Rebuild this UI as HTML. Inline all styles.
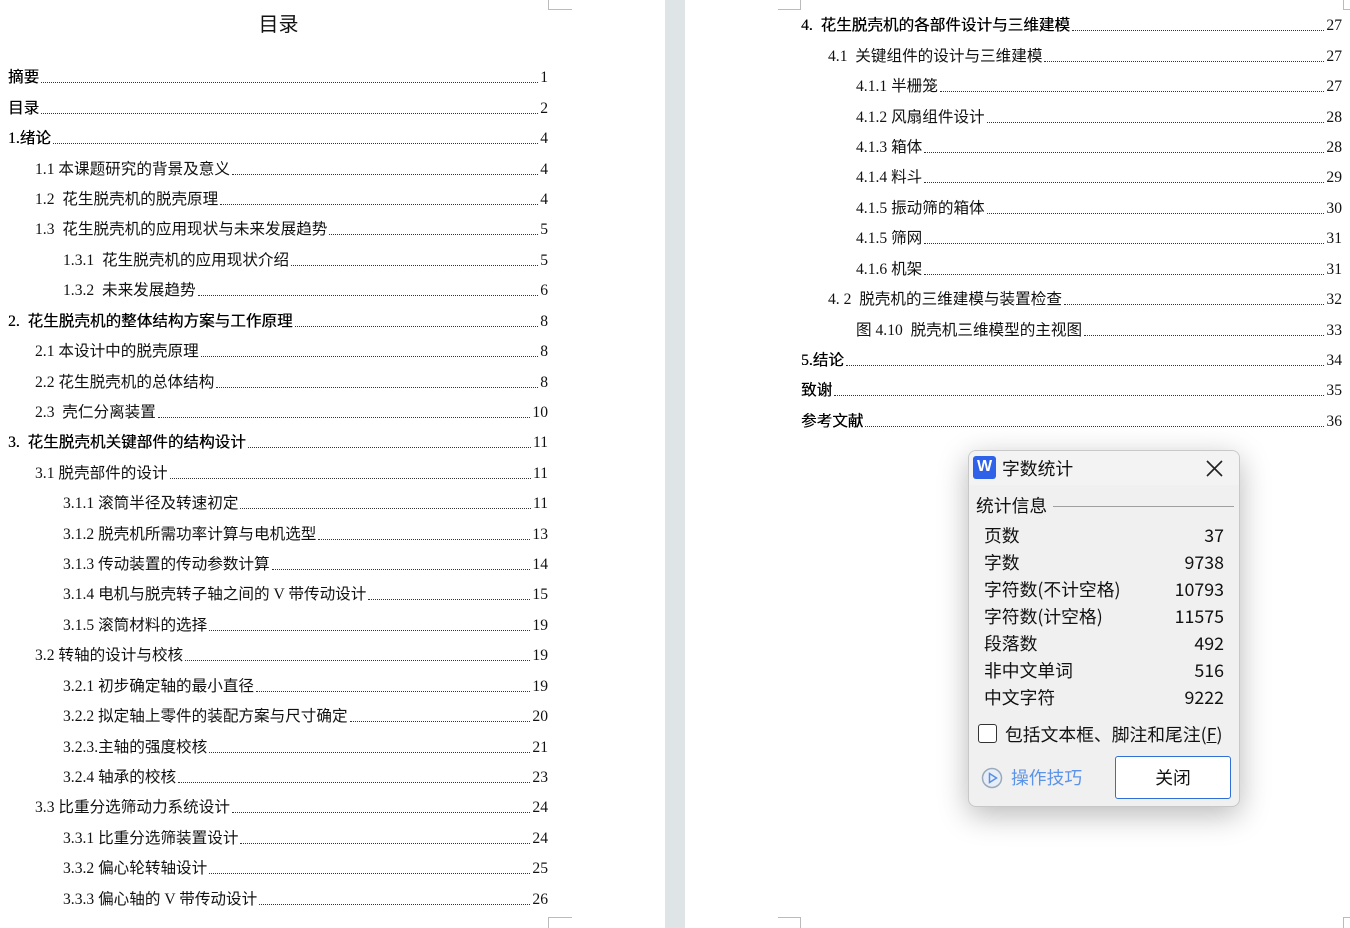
<!DOCTYPE html>
<html><head><meta charset="utf-8"><style>
*{margin:0;padding:0;box-sizing:border-box}
body{width:1350px;height:928px;overflow:hidden;background:#fff;position:relative;font-family:"Liberation Serif","Noto Sans CJK SC",serif;color:#111}
.gap{position:absolute;left:665px;top:0;width:20px;height:928px;background:#dfe5e6}
.r{position:absolute;display:flex;align-items:flex-end;font-size:15.6px;height:20px;line-height:20px;white-space:nowrap;margin-top:2px}
.r .t{flex:none}
.r .d{flex:1;border-bottom:1px dotted #333;margin:0 2px 5px 2px}
.r .n{flex:none}
.b .t{color:#000;text-shadow:0.3px 0 0 #000}
.cm{position:absolute;border-color:#bbb;border-style:solid;border-width:0}
h1{position:absolute;left:0;width:557px;top:8px;text-align:center;font-size:20px;font-weight:normal;font-family:"Noto Sans CJK SC",sans-serif}
.dlg{position:absolute;left:968px;top:450px;width:272px;height:357px;background:#f0f0f0;border:1px solid #c8c8c8;border-radius:8px;box-shadow:0 8px 30px rgba(0,0,0,.28);font-family:"Noto Sans CJK SC",sans-serif;overflow:hidden}
.tb{height:34px;background:#f3f3f3;position:relative}
.dlg .row{position:absolute;left:15px;width:240px;font-size:17.8px;display:flex;justify-content:space-between;line-height:20px;color:#111}
</style></head><body>
<div class="gap"></div>
<h1>目录</h1>
<div class="cm" style="left:548px;top:0;width:24px;height:10px;border-left-width:1px;border-bottom-width:1px"></div>
<div class="cm" style="left:548px;top:917px;width:24px;height:11px;border-left-width:1px;border-top-width:1px"></div>
<div class="cm" style="left:778px;top:0;width:23px;height:10px;border-right-width:1px;border-bottom-width:1px"></div>
<div class="cm" style="left:778px;top:917px;width:23px;height:11px;border-right-width:1px;border-top-width:1px"></div>
<div class="cm" style="left:1343px;top:0;width:7px;height:10px;border-left-width:1px;border-bottom-width:1px"></div>
<div class="cm" style="left:1343px;top:917px;width:7px;height:11px;border-left-width:1px;border-top-width:1px"></div>

<div class="r b" style="left:8px;width:540px;top:66px"><span class="t">摘要</span><span class="d"></span><span class="n">1</span></div>
<div class="r b" style="left:8px;width:540px;top:97px"><span class="t">目录</span><span class="d"></span><span class="n">2</span></div>
<div class="r b" style="left:8px;width:540px;top:127px"><span class="t">1.绪论</span><span class="d"></span><span class="n">4</span></div>
<div class="r" style="left:35px;width:513px;top:158px"><span class="t">1.1 本课题研究的背景及意义</span><span class="d"></span><span class="n">4</span></div>
<div class="r" style="left:35px;width:513px;top:188px"><span class="t">1.2&nbsp; 花生脱壳机的脱壳原理</span><span class="d"></span><span class="n">4</span></div>
<div class="r" style="left:35px;width:513px;top:218px"><span class="t">1.3&nbsp; 花生脱壳机的应用现状与未来发展趋势</span><span class="d"></span><span class="n">5</span></div>
<div class="r" style="left:63px;width:485px;top:249px"><span class="t">1.3.1&nbsp; 花生脱壳机的应用现状介绍</span><span class="d"></span><span class="n">5</span></div>
<div class="r" style="left:63px;width:485px;top:279px"><span class="t">1.3.2&nbsp; 未来发展趋势</span><span class="d"></span><span class="n">6</span></div>
<div class="r b" style="left:8px;width:540px;top:310px"><span class="t">2.&nbsp; 花生脱壳机的整体结构方案与工作原理</span><span class="d"></span><span class="n">8</span></div>
<div class="r" style="left:35px;width:513px;top:340px"><span class="t">2.1 本设计中的脱壳原理</span><span class="d"></span><span class="n">8</span></div>
<div class="r" style="left:35px;width:513px;top:371px"><span class="t">2.2 花生脱壳机的总体结构</span><span class="d"></span><span class="n">8</span></div>
<div class="r" style="left:35px;width:513px;top:401px"><span class="t">2.3&nbsp; 壳仁分离装置</span><span class="d"></span><span class="n">10</span></div>
<div class="r b" style="left:8px;width:540px;top:431px"><span class="t">3.&nbsp; 花生脱壳机关键部件的结构设计</span><span class="d"></span><span class="n">11</span></div>
<div class="r" style="left:35px;width:513px;top:462px"><span class="t">3.1 脱壳部件的设计</span><span class="d"></span><span class="n">11</span></div>
<div class="r" style="left:63px;width:485px;top:492px"><span class="t">3.1.1 滚筒半径及转速初定</span><span class="d"></span><span class="n">11</span></div>
<div class="r" style="left:63px;width:485px;top:523px"><span class="t">3.1.2 脱壳机所需功率计算与电机选型</span><span class="d"></span><span class="n">13</span></div>
<div class="r" style="left:63px;width:485px;top:553px"><span class="t">3.1.3 传动装置的传动参数计算</span><span class="d"></span><span class="n">14</span></div>
<div class="r" style="left:63px;width:485px;top:583px"><span class="t">3.1.4 电机与脱壳转子轴之间的 V 带传动设计</span><span class="d"></span><span class="n">15</span></div>
<div class="r" style="left:63px;width:485px;top:614px"><span class="t">3.1.5 滚筒材料的选择</span><span class="d"></span><span class="n">19</span></div>
<div class="r" style="left:35px;width:513px;top:644px"><span class="t">3.2 转轴的设计与校核</span><span class="d"></span><span class="n">19</span></div>
<div class="r" style="left:63px;width:485px;top:675px"><span class="t">3.2.1 初步确定轴的最小直径</span><span class="d"></span><span class="n">19</span></div>
<div class="r" style="left:63px;width:485px;top:705px"><span class="t">3.2.2 拟定轴上零件的装配方案与尺寸确定</span><span class="d"></span><span class="n">20</span></div>
<div class="r" style="left:63px;width:485px;top:736px"><span class="t">3.2.3.主轴的强度校核</span><span class="d"></span><span class="n">21</span></div>
<div class="r" style="left:63px;width:485px;top:766px"><span class="t">3.2.4 轴承的校核</span><span class="d"></span><span class="n">23</span></div>
<div class="r" style="left:35px;width:513px;top:796px"><span class="t">3.3 比重分选筛动力系统设计</span><span class="d"></span><span class="n">24</span></div>
<div class="r" style="left:63px;width:485px;top:827px"><span class="t">3.3.1 比重分选筛装置设计</span><span class="d"></span><span class="n">24</span></div>
<div class="r" style="left:63px;width:485px;top:857px"><span class="t">3.3.2 偏心轮转轴设计</span><span class="d"></span><span class="n">25</span></div>
<div class="r" style="left:63px;width:485px;top:888px"><span class="t">3.3.3 偏心轴的 V 带传动设计</span><span class="d"></span><span class="n">26</span></div>

<div class="r b" style="left:801px;width:541px;top:14px"><span class="t">4.&nbsp; 花生脱壳机的各部件设计与三维建模</span><span class="d"></span><span class="n">27</span></div>
<div class="r" style="left:828px;width:514px;top:45px"><span class="t">4.1&nbsp; 关键组件的设计与三维建模</span><span class="d"></span><span class="n">27</span></div>
<div class="r" style="left:856px;width:486px;top:75px"><span class="t">4.1.1 半栅笼</span><span class="d"></span><span class="n">27</span></div>
<div class="r" style="left:856px;width:486px;top:106px"><span class="t">4.1.2 风扇组件设计</span><span class="d"></span><span class="n">28</span></div>
<div class="r" style="left:856px;width:486px;top:136px"><span class="t">4.1.3 箱体</span><span class="d"></span><span class="n">28</span></div>
<div class="r" style="left:856px;width:486px;top:166px"><span class="t">4.1.4 料斗</span><span class="d"></span><span class="n">29</span></div>
<div class="r" style="left:856px;width:486px;top:197px"><span class="t">4.1.5 振动筛的箱体</span><span class="d"></span><span class="n">30</span></div>
<div class="r" style="left:856px;width:486px;top:227px"><span class="t">4.1.5 筛网</span><span class="d"></span><span class="n">31</span></div>
<div class="r" style="left:856px;width:486px;top:258px"><span class="t">4.1.6 机架</span><span class="d"></span><span class="n">31</span></div>
<div class="r" style="left:828px;width:514px;top:288px"><span class="t">4. 2&nbsp; 脱壳机的三维建模与装置检查</span><span class="d"></span><span class="n">32</span></div>
<div class="r" style="left:856px;width:486px;top:319px"><span class="t">图 4.10&nbsp; 脱壳机三维模型的主视图</span><span class="d"></span><span class="n">33</span></div>
<div class="r b" style="left:801px;width:541px;top:349px"><span class="t">5.结论</span><span class="d"></span><span class="n">34</span></div>
<div class="r b" style="left:801px;width:541px;top:379px"><span class="t">致谢</span><span class="d"></span><span class="n">35</span></div>
<div class="r b" style="left:801px;width:541px;top:410px"><span class="t">参考文献</span><span class="d"></span><span class="n">36</span></div>

<div class="dlg">
 <div class="tb">
  <div style="position:absolute;left:4px;top:5px;width:23px;height:23px;background:#2f62e8;border-radius:3px;color:#fff;font:bold 16px 'Liberation Sans',sans-serif;text-align:center;line-height:22px">W</div>
  <div style="position:absolute;left:33px;top:5px;font-size:17.8px;line-height:24px">字数统计</div>
  <svg style="position:absolute;left:237px;top:9px" width="17" height="17"><path d="M1 1L16 16M16 1L1 16" stroke="#222" stroke-width="1.6"/></svg>
 </div>
 <div style="position:absolute;left:7px;top:43px;font-size:17.8px;line-height:22px">统计信息</div>
 <div style="position:absolute;left:84px;top:55px;width:181px;height:1px;background:#a0a0a0"></div>
 <div class="row" style="top:74px"><span>页数</span><span>37</span></div>
 <div class="row" style="top:101px"><span>字数</span><span>9738</span></div>
 <div class="row" style="top:128px"><span>字符数(不计空格)</span><span>10793</span></div>
 <div class="row" style="top:155px"><span>字符数(计空格)</span><span>11575</span></div>
 <div class="row" style="top:182px"><span>段落数</span><span>492</span></div>
 <div class="row" style="top:209px"><span>非中文单词</span><span>516</span></div>
 <div class="row" style="top:236px"><span>中文字符</span><span>9222</span></div>
 <div style="position:absolute;left:9px;top:273px;width:19px;height:19px;border:1px solid #333;border-radius:3px;background:#fff"></div>
 <div style="position:absolute;left:36px;top:272px;font-size:17.8px;line-height:22px">包括文本框、脚注和尾注(<u>F</u>)</div>
 <svg style="position:absolute;left:12px;top:316px" width="22" height="22"><circle cx="11" cy="11" r="9.5" fill="#e8eef8" stroke="#9ab" stroke-width="1.5"/><path d="M8.5 6.5v9l7-4.5z" fill="none" stroke="#5a8fe0" stroke-width="1.5"/></svg>
 <div style="position:absolute;left:42px;top:315px;font-size:17.8px;line-height:22px;color:#5b93e8">操作技巧</div>
 <div style="position:absolute;left:146px;top:305px;width:116px;height:43px;background:#fff;border:1px solid #2f6fd6;border-radius:3px;text-align:center;line-height:41px;font-size:17.8px">关闭</div>
</div>
</body></html>
